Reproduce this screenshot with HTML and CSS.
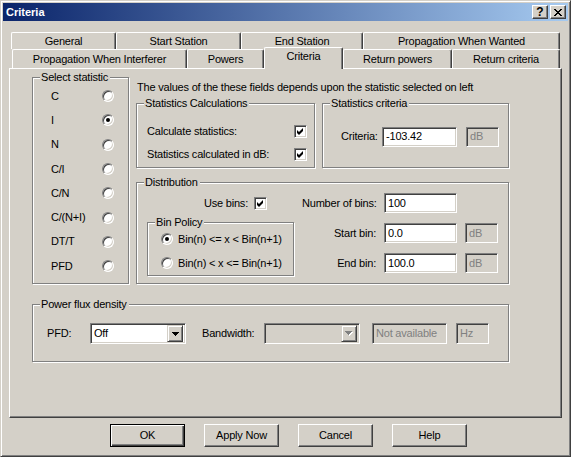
FILE: index.html
```html
<!DOCTYPE html>
<html>
<head>
<meta charset="utf-8">
<title>Criteria</title>
<link rel="stylesheet" href="styles.css">
</head>
<body>
<div class="window">
  <div class="titlebar">
    <span class="title">Criteria</span>
    <span class="cbtn help">?</span>
    <span class="cbtn close"><svg width="8" height="7" viewBox="0 0 8 7" shape-rendering="crispEdges"><path d="M0 0h2v1h-2z M6 0h2v1h-2z M1 1h2v1h-2z M5 1h2v1h-2z M2 2h4v1h-4z M3 3h2v1h-2z M2 4h4v1h-4z M1 5h2v1h-2z M5 5h2v1h-2z M0 6h2v1h-2z M6 6h2v1h-2z" fill="#000"/></svg></span>
  </div>

  <div class="tabrow row1">
    <div class="tab t-general">General</div>
    <div class="tab t-start">Start Station</div>
    <div class="tab t-end">End Station</div>
    <div class="tab t-wanted">Propagation When Wanted</div>
  </div>
  <div class="tabrow row2">
    <div class="tab t-interf">Propagation When Interferer</div>
    <div class="tab t-powers">Powers</div>
    <div class="tab t-criteria selected">Criteria</div>
    <div class="tab t-rpowers">Return powers</div>
    <div class="tab t-rcriteria">Return criteria</div>
  </div>

  <div class="panel">
    <div class="main">
      <div class="group stat-group">
        <div class="gtitle">Select statistic</div>
        <div class="stat-row"><span>C</span><span class="radio"></span></div>
        <div class="stat-row"><span>I</span><span class="radio on"></span></div>
        <div class="stat-row"><span>N</span><span class="radio"></span></div>
        <div class="stat-row"><span>C/I</span><span class="radio"></span></div>
        <div class="stat-row"><span>C/N</span><span class="radio"></span></div>
        <div class="stat-row"><span>C/(N+I)</span><span class="radio"></span></div>
        <div class="stat-row"><span>DT/T</span><span class="radio"></span></div>
        <div class="stat-row"><span>PFD</span><span class="radio"></span></div>
      </div>

      <div class="rightcol">
        <div class="info">The values of the these fields depends upon the statistic selected on left</div>
        <div class="stats-row">
          <div class="group calc-group">
            <div class="gtitle">Statistics Calculations</div>
            <div class="chk-row first"><span>Calculate statistics:</span><span class="check"><svg width="13" height="13" viewBox="0 0 13 13"><polygon points="3,5 5,7 9,3 9,6 5,10 3,8" fill="#000"/></svg></span></div>
            <div class="chk-row"><span>Statistics calculated in dB:</span><span class="check"><svg width="13" height="13" viewBox="0 0 13 13"><polygon points="3,5 5,7 9,3 9,6 5,10 3,8" fill="#000"/></svg></span></div>
          </div>
          <div class="group crit-group">
            <div class="gtitle">Statistics criteria</div>
            <div class="crit-row">
              <span class="crit-label">Criteria:</span>
              <span class="field crit-input">-103.42</span>
              <span class="field disabled unit crit-unit">dB</span>
            </div>
          </div>
        </div>

        <div class="group dist-group">
          <div class="gtitle">Distribution</div>
          <div class="dist-body">
            <div class="dist-left">
              <div class="usebins"><span>Use bins:</span><span class="check"><svg width="13" height="13" viewBox="0 0 13 13"><polygon points="3,5 5,7 9,3 9,6 5,10 3,8" fill="#000"/></svg></span></div>
              <div class="group binpolicy">
                <div class="gtitle">Bin Policy</div>
                <div class="bp-row first"><span class="radio on"></span><span>Bin(n) &lt;= x &lt; Bin(n+1)</span></div>
                <div class="bp-row"><span class="radio"></span><span>Bin(n) &lt; x &lt;= Bin(n+1)</span></div>
              </div>
            </div>
            <div class="bins-grid">
              <span class="blabel">Number of bins:</span><span class="field">100</span><span></span>
              <span class="blabel">Start bin:</span><span class="field">0.0</span><span class="field disabled unit">dB</span>
              <span class="blabel">End bin:</span><span class="field">100.0</span><span class="field disabled unit">dB</span>
            </div>
          </div>
        </div>
      </div>
    </div>

    <div class="group pfd-group">
      <div class="gtitle">Power flux density</div>
      <div class="pfd-row">
        <span class="pfd-label">PFD:</span>
        <span class="field combo pfd-combo"><span class="combo-text">Off</span><span class="drop"><svg width="7" height="4" viewBox="0 0 7 4" shape-rendering="crispEdges"><path d="M0 0h7v1h-7z M1 1h5v1h-5z M2 2h3v1h-3z M3 3h1v1h-1z" fill="#000"/></svg></span></span>
        <span class="bw-label">Bandwidth:</span>
        <span class="field combo disabled bw-combo"><span class="combo-text"></span><span class="drop"><svg width="8" height="5" viewBox="0 0 8 5" shape-rendering="crispEdges"><path d="M1 1h7v1h-7z M2 2h5v1h-5z M3 3h3v1h-3z M4 4h1v1h-1z" fill="#fff"/><path d="M0 0h7v1h-7z M1 1h5v1h-5z M2 2h3v1h-3z M3 3h1v1h-1z" fill="#808080"/></svg></span></span>
        <span class="field disabled na">Not available</span>
        <span class="field disabled unit hz">Hz</span>
      </div>
    </div>
  </div>

  <div class="buttons">
    <div class="btn default">OK</div>
    <div class="btn">Apply Now</div>
    <div class="btn">Cancel</div>
    <div class="btn">Help</div>
  </div>
</div>
</body>
</html>
```
FILE: styles.css
```css
* { box-sizing: border-box; }
html, body { margin: 0; padding: 0; }
body {
  background: #d4d0c8;
  font-family: "Liberation Sans", Arial, sans-serif;
  font-size: 11px;
  line-height: 13px;
  color: #000;
  letter-spacing: -0.2px;
}

.window {
  width: 571px;
  height: 457px;
  border: 1px solid;
  border-color: #d4d0c8 #404040 #404040 #d4d0c8;
  box-shadow: inset 1px 1px #fff, inset -1px -1px #808080;
  padding: 2px;
  overflow: hidden;
}

/* title bar */
.titlebar {
  height: 18px;
  background: linear-gradient(to right, #0a246a, #a6caf0);
  display: flex;
  align-items: center;
  padding: 0 2px 0 3px;
}
.title {
  flex: 1;
  color: #fff;
  font-weight: bold;
  letter-spacing: 0;
}
.cbtn {
  width: 16px;
  height: 14px;
  background: #d4d0c8;
  border: 1px solid;
  border-color: #fff #404040 #404040 #fff;
  box-shadow: inset -1px -1px #808080;
  display: flex;
  align-items: center;
  justify-content: center;
}
.cbtn.help {
  margin-right: 2px;
  font-weight: bold;
  font-size: 12px;
  letter-spacing: 0;
}

/* tabs */
.tabrow { display: flex; }
.row1 { margin: 11px 0 0 8px; height: 17px; }
.row2 { margin-left: 9px; height: 19px; }
.tab {
  background: #d4d0c8;
  border-left: 1px solid #fff;
  border-top: 1px solid #fff;
  border-right: 1px solid #404040;
  box-shadow: inset -1px 0 #808080;
  border-radius: 2px 2px 0 0;
  display: flex;
  align-items: center;
  justify-content: center;
  white-space: nowrap;
}
.row1 .tab { height: 17px; }
.row2 .tab { height: 19px; }
.t-general { width: 105px; }
.t-start { width: 125px; }
.t-end { width: 122px; }
.t-wanted { width: 197px; }
.t-interf { width: 175px; }
.t-powers { width: 77px; }
.t-criteria { width: 79px; }
.t-rpowers { width: 109px; }
.t-rcriteria { width: 108px; }
.row2 .tab.selected {
  position: relative;
  z-index: 1;
  height: 22px;
  margin-top: -2px;
  margin-bottom: -1px;
  padding-bottom: 4px;
}

/* panel */
.panel {
  margin-left: 6px;
  width: 553px;
  height: 350px;
  border-left: 1px solid #fff;
  border-top: 1px solid #fff;
  border-right: 1px solid #404040;
  border-bottom: 1px solid #404040;
  box-shadow: inset -1px -1px #808080;
  padding: 8px 0 0 22px;
}
.main { display: flex; }

.group {
  position: relative;
  border: 1px solid #808080;
  box-shadow: 1px 1px 0 #fff, inset 1px 1px 0 #fff;
}
.gtitle {
  display: table;
  margin: -7px 0 0 7px;
  padding: 0 2px 0 1px;
  background: #d4d0c8;
  height: 13px;
  white-space: nowrap;
}

/* select statistic */
.stat-group { width: 97px; height: 207px; }
.stat-row {
  height: 24.3px;
  display: flex;
  align-items: center;
  justify-content: space-between;
  padding: 0 14px 0 18px;
}

.radio {
  position: relative;
  width: 12px;
  height: 12px;
  border-radius: 50%;
  background: #fff;
  border: 1px solid;
  border-color: #808080 #fff #fff #808080;
  box-shadow: inset 1px 1px 0 #404040, inset -1px -1px 0 #d4d0c8;
  flex: none;
}
.radio.on::after {
  content: "";
  position: absolute;
  left: 3px;
  top: 3px;
  width: 4px;
  height: 4px;
  border-radius: 50%;
  background: #000;
}

.check {
  width: 13px;
  height: 13px;
  background: #fff;
  border: 1px solid;
  border-color: #808080 #fff #fff #808080;
  box-shadow: inset 1px 1px 0 #404040, inset -1px -1px 0 #d4d0c8;
  flex: none;
  position: relative;
}
.check svg { position: absolute; left: -1px; top: -1px; }

/* right column */
.rightcol { margin-left: 7px; width: 373px; }
.info { margin-top: 4px; height: 13px; padding-left: 1px; white-space: nowrap; }
.stats-row { display: flex; margin-top: 9px; }
.calc-group { width: 179px; height: 65px; }
.crit-group { width: 187px; height: 65px; margin-left: 7px; }

.chk-row {
  display: flex;
  align-items: center;
  justify-content: space-between;
  height: 13px;
  padding: 0 7px 0 10px;
  margin-top: 10px;
}
.chk-row.first { margin-top: 15px; }

.crit-row {
  display: flex;
  align-items: center;
  margin-top: 16px;
  padding-left: 18px;
  height: 21px;
}
.crit-label { width: 41px; }
.crit-input { width: 75px; height: 21px; }
.crit-unit { margin-left: 9px; height: 21px; }

.field {
  height: 20px;
  background: #fff;
  border: 1px solid;
  border-color: #808080 #fff #fff #808080;
  box-shadow: inset 1px 1px 0 #404040, inset -1px -1px 0 #d4d0c8;
  padding: 0 3px;
  display: flex;
  align-items: center;
  white-space: nowrap;
}
.field.disabled { background: #d4d0c8; color: #808080; }
.unit { width: 33px; }

/* distribution */
.dist-group { width: 373px; height: 102px; margin-top: 14px; }
.dist-body { display: flex; margin-top: 4px; padding-left: 10px; }
.dist-left { width: 147px; }
.usebins {
  height: 20px;
  display: flex;
  align-items: center;
  justify-content: flex-end;
  gap: 6px;
  padding-right: 27px;
}
.binpolicy { width: 147px; height: 54px; margin-top: 9px; }
.bp-row {
  display: flex;
  align-items: center;
  gap: 5px;
  height: 12px;
  padding-left: 13px;
  margin-top: 12px;
  white-space: nowrap;
}
.bp-row.first { margin-top: 4px; }

.bins-grid {
  margin-left: 8px;
  display: grid;
  grid-template-columns: 74px 73px 33px;
  grid-auto-rows: 20px;
  column-gap: 8px;
  row-gap: 10px;
  align-items: center;
}
.blabel { text-align: right; white-space: nowrap; }

/* pfd */
.pfd-group { width: 477px; height: 58px; margin-top: 20px; }
.pfd-row {
  display: flex;
  align-items: center;
  margin-top: 12px;
  padding-left: 14px;
  height: 21px;
}
.pfd-row .field { height: 21px; }
.pfd-label { width: 43px; }
.combo { padding: 0 2px 0 3px; }
.combo-text { flex: 1; }
.drop {
  width: 16px;
  height: 17px;
  background: #d4d0c8;
  border: 1px solid;
  border-color: #d4d0c8 #404040 #404040 #d4d0c8;
  box-shadow: inset 1px 1px 0 #fff, inset -1px -1px 0 #808080;
  display: flex;
  align-items: center;
  justify-content: center;
}
.pfd-combo { width: 96px; }
.bw-label { margin-left: 16px; width: 62px; }
.bw-combo { width: 96px; }
.na { margin-left: 12px; width: 75px; }
.hz { margin-left: 9px; }

/* buttons */
.buttons {
  display: flex;
  gap: 19px;
  margin-top: 6px;
  padding-left: 107px;
}
.btn {
  width: 75px;
  height: 23px;
  border: 1px solid;
  border-color: #fff #404040 #404040 #fff;
  box-shadow: inset -1px -1px 0 #808080;
  display: flex;
  align-items: center;
  justify-content: center;
}
.btn.default {
  border: 1px solid #000;
  box-shadow: inset 1px 1px 0 #fff, inset -1px -1px 0 #404040, inset -2px -2px 0 #808080;
}
```
